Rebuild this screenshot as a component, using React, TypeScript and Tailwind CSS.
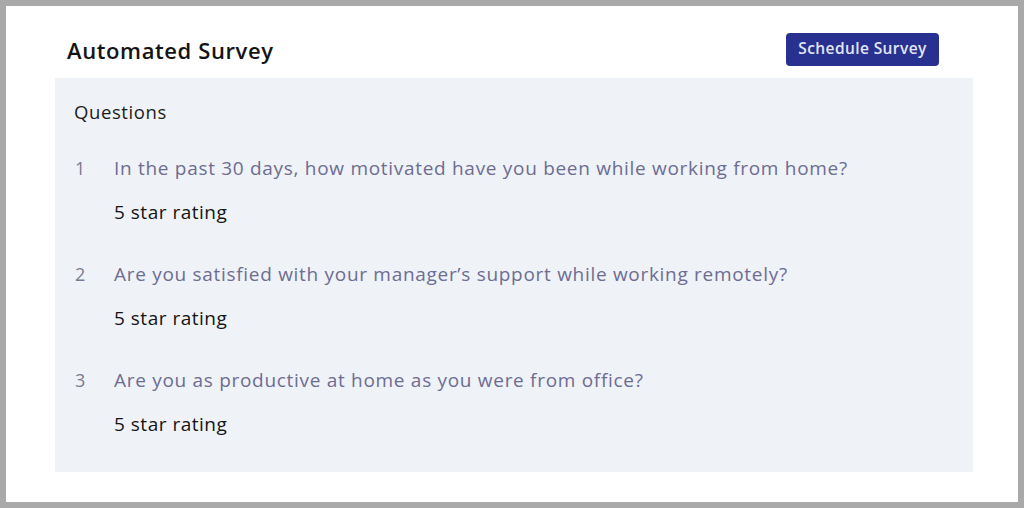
import React from "react";

const questions = [
  "In the past 30 days, how motivated have you been while working from home?",
  "Are you satisfied with your manager\u2019s support while working remotely?",
  "Are you as productive at home as you were from office?",
];

export default function App() {
  return (
    <div
      className="w-[1024px] h-[508px] bg-[#a9a9a9] p-[6px]"
      style={{ fontFamily: "'Open Sans', Lato, sans-serif" }}
    >
      <div className="w-full h-full bg-white flex flex-col">
        <div className="h-[72px] pt-[16px] flex items-center justify-between pl-[61px] pr-[79px]">
          <h1 className="text-[22px] font-semibold text-[#141414] tracking-[0.6px] leading-[30px]">
            Automated Survey
          </h1>
          <button className="h-[33px] w-[153px] rounded-[4px] bg-[#283190] text-[#e3e6f6] text-[15.5px] font-semibold tracking-[0.4px] mt-[-2px]">
            Schedule Survey
          </button>
        </div>
        <div className="ml-[49px] mr-[45px] h-[394px] bg-[#eff2f7] pl-[19px] pt-[21px]">
          <div className="text-[18.5px] text-[#1c1c1c] leading-[26px] tracking-[0.6px]">Questions</div>
          <div className="flex flex-col mt-[30px] gap-[36px]">
            {questions.map((q, i) => (
              <div key={i} className="flex">
                <div className="w-[40px] pl-[1px] text-[18px] text-[#7b7b90] leading-[26px]">{i + 1}</div>
                <div className="flex flex-col gap-[18px]">
                  <div className="text-[19px] text-[#6d6d92] leading-[26px] tracking-[0.7px]">{q}</div>
                  <div className="text-[19px] text-[#151515] leading-[26px] tracking-[0.5px]">5 star rating</div>
                </div>
              </div>
            ))}
          </div>
        </div>
      </div>
    </div>
  );
}
